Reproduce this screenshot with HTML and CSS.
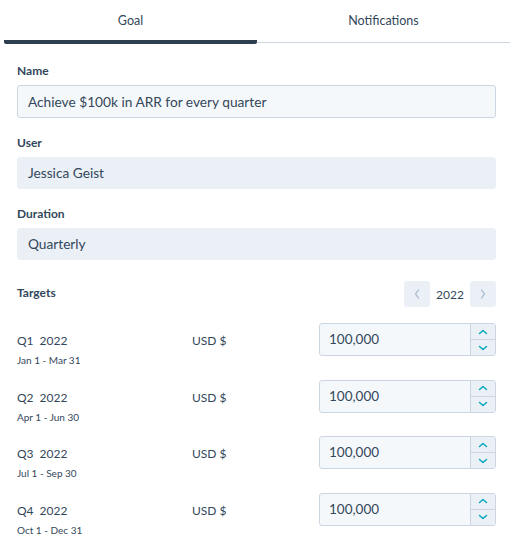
FILE: index.html
```html
<!DOCTYPE html>
<html>
<head>
<meta charset="utf-8">
<link rel="stylesheet" href="styles.css">
</head>
<body>
<div class="panel">
  <div class="tabs">
    <div class="tab active">Goal</div>
    <div class="tab">Notifications</div>
  </div>
  <div class="content">
    <div class="field">
      <div class="label">Name</div>
      <div class="input editable">Achieve $100k in ARR for every quarter</div>
    </div>
    <div class="field">
      <div class="label">User</div>
      <div class="input readonly">Jessica Geist</div>
    </div>
    <div class="field">
      <div class="label">Duration</div>
      <div class="input readonly">Quarterly</div>
    </div>
    <div class="targets-head">
      <div class="label">Targets</div>
      <div class="yearnav">
        <div class="navbtn"><svg width="8" height="12" viewBox="0 0 8 12"><polyline points="5.5,2 2.5,6 5.5,10" fill="none" stroke="#b0c1d4" stroke-width="1.3" stroke-linecap="round" stroke-linejoin="round"/></svg></div>
        <div class="year">2022</div>
        <div class="navbtn"><svg width="8" height="12" viewBox="0 0 8 12"><polyline points="2.5,2 5.5,6 2.5,10" fill="none" stroke="#b0c1d4" stroke-width="1.3" stroke-linecap="round" stroke-linejoin="round"/></svg></div>
      </div>
    </div>
    <div class="rows">
      <div class="row">
        <div class="period"><div class="q"><span>Q1</span><span>2022</span></div><div class="dates">Jan 1 - Mar 31</div></div>
        <div class="cur">USD $</div>
        <div class="num"><div class="val">100,000</div><div class="stepper"><div class="step"><svg width="10" height="6" viewBox="0 0 10 6"><polyline points="1.5,4.5 5,1.5 8.5,4.5" fill="none" stroke="#00a4bd" stroke-width="1.4" stroke-linecap="round" stroke-linejoin="round"/></svg></div><div class="step"><svg width="10" height="6" viewBox="0 0 10 6"><polyline points="1.5,1.5 5,4.5 8.5,1.5" fill="none" stroke="#00a4bd" stroke-width="1.4" stroke-linecap="round" stroke-linejoin="round"/></svg></div></div></div>
      </div>
      <div class="row">
        <div class="period"><div class="q"><span>Q2</span><span>2022</span></div><div class="dates">Apr 1 - Jun 30</div></div>
        <div class="cur">USD $</div>
        <div class="num"><div class="val">100,000</div><div class="stepper"><div class="step"><svg width="10" height="6" viewBox="0 0 10 6"><polyline points="1.5,4.5 5,1.5 8.5,4.5" fill="none" stroke="#00a4bd" stroke-width="1.4" stroke-linecap="round" stroke-linejoin="round"/></svg></div><div class="step"><svg width="10" height="6" viewBox="0 0 10 6"><polyline points="1.5,1.5 5,4.5 8.5,1.5" fill="none" stroke="#00a4bd" stroke-width="1.4" stroke-linecap="round" stroke-linejoin="round"/></svg></div></div></div>
      </div>
      <div class="row">
        <div class="period"><div class="q"><span>Q3</span><span>2022</span></div><div class="dates">Jul 1 - Sep 30</div></div>
        <div class="cur">USD $</div>
        <div class="num"><div class="val">100,000</div><div class="stepper"><div class="step"><svg width="10" height="6" viewBox="0 0 10 6"><polyline points="1.5,4.5 5,1.5 8.5,4.5" fill="none" stroke="#00a4bd" stroke-width="1.4" stroke-linecap="round" stroke-linejoin="round"/></svg></div><div class="step"><svg width="10" height="6" viewBox="0 0 10 6"><polyline points="1.5,1.5 5,4.5 8.5,1.5" fill="none" stroke="#00a4bd" stroke-width="1.4" stroke-linecap="round" stroke-linejoin="round"/></svg></div></div></div>
      </div>
      <div class="row">
        <div class="period"><div class="q"><span>Q4</span><span>2022</span></div><div class="dates">Oct 1 - Dec 31</div></div>
        <div class="cur">USD $</div>
        <div class="num"><div class="val">100,000</div><div class="stepper"><div class="step"><svg width="10" height="6" viewBox="0 0 10 6"><polyline points="1.5,4.5 5,1.5 8.5,4.5" fill="none" stroke="#00a4bd" stroke-width="1.4" stroke-linecap="round" stroke-linejoin="round"/></svg></div><div class="step"><svg width="10" height="6" viewBox="0 0 10 6"><polyline points="1.5,1.5 5,4.5 8.5,1.5" fill="none" stroke="#00a4bd" stroke-width="1.4" stroke-linecap="round" stroke-linejoin="round"/></svg></div></div></div>
      </div>
    </div>
  </div>
</div>
</body>
</html>
```
FILE: styles.css
```css
* { box-sizing: border-box; }
html, body { margin: 0; background: #fff; }
body {
  font-family: Lato, "Open Sans", sans-serif;
  color: #33475b;
  width: 517px;
  height: 543px;
  overflow: hidden;
}
.tabs {
  display: flex;
  align-items: flex-start;
  margin: 0 7px 0 4px;
}
.tab {
  flex: 1;
  text-align: center;
  font-size: 12.5px;
  line-height: 18px;
  padding: 12px 0 12px;
  border-bottom: 1px solid #cbd6e2;
  color: #33475b;
}
.tab.active {
  padding-bottom: 10px;
  border-bottom: 4px solid #2d3e50;
  border-radius: 0 0 2px 2px;
}
.content {
  padding: 18px 21px 0 17px;
}
.field { margin-bottom: 16px; }
.label {
  font-size: 12px;
  font-weight: 700;
  line-height: 18px;
  color: #33475b;
  margin-bottom: 5px;
}
.input {
  height: 33px;
  border-radius: 3px;
  font-size: 13.7px;
  line-height: 31px;
  padding: 0 10px;
  color: #33475b;
}
.editable {
  background: #f5f8fa;
  border: 1px solid #cbd6e2;
}
.readonly {
  background: #eaf0f6;
  border: 1px solid #eaf0f6;
  height: 32px;
  line-height: 30px;
}
.targets-head {
  margin-top: 21px;
  display: flex;
  justify-content: space-between;
  align-items: center;
  height: 26px;
}
.targets-head .label { margin: 0 0 2px 0; }
.yearnav {
  display: flex;
  align-items: center;
}
.navbtn {
  width: 26px;
  height: 26px;
  background: #eaf0f6;
  border-radius: 3px;
  display: flex;
  align-items: center;
  justify-content: center;
}
.year {
  font-size: 12px;
  width: 40px;
  text-align: center;
  color: #33475b;
}
.rows {
  margin-top: 16px;
  display: flex;
  flex-direction: column;
  gap: 11.67px;
}
.row {
  display: flex;
  align-items: flex-start;
  height: 45px;
}
.period { width: 175px; }
.q {
  font-size: 12px;
  line-height: 20px;
  padding-top: 8px;
  display: flex;
  gap: 6px;
}
.dates {
  font-size: 10px;
  line-height: 16px;
  margin-top: 1px;
}
.cur {
  width: 127px;
  font-size: 12px;
  line-height: 20px;
  padding-top: 8px;
}
.num {
  flex: 1;
  height: 33px;
  display: flex;
  background: #f5f8fa;
  border: 1px solid #cbd6e2;
  border-radius: 3px;
  overflow: hidden;
}
.val {
  flex: 1;
  font-size: 13.5px;
  line-height: 31px;
  padding-left: 9px;
}
.stepper {
  width: 25px;
  display: flex;
  flex-direction: column;
  border-left: 1px solid #cbd6e2;
  background: #eaf0f6;
}
.step {
  flex: 1;
  display: flex;
  align-items: center;
  justify-content: center;
}
.step + .step { border-top: 1px solid #cbd6e2; }
.step svg { display: block; }
```
